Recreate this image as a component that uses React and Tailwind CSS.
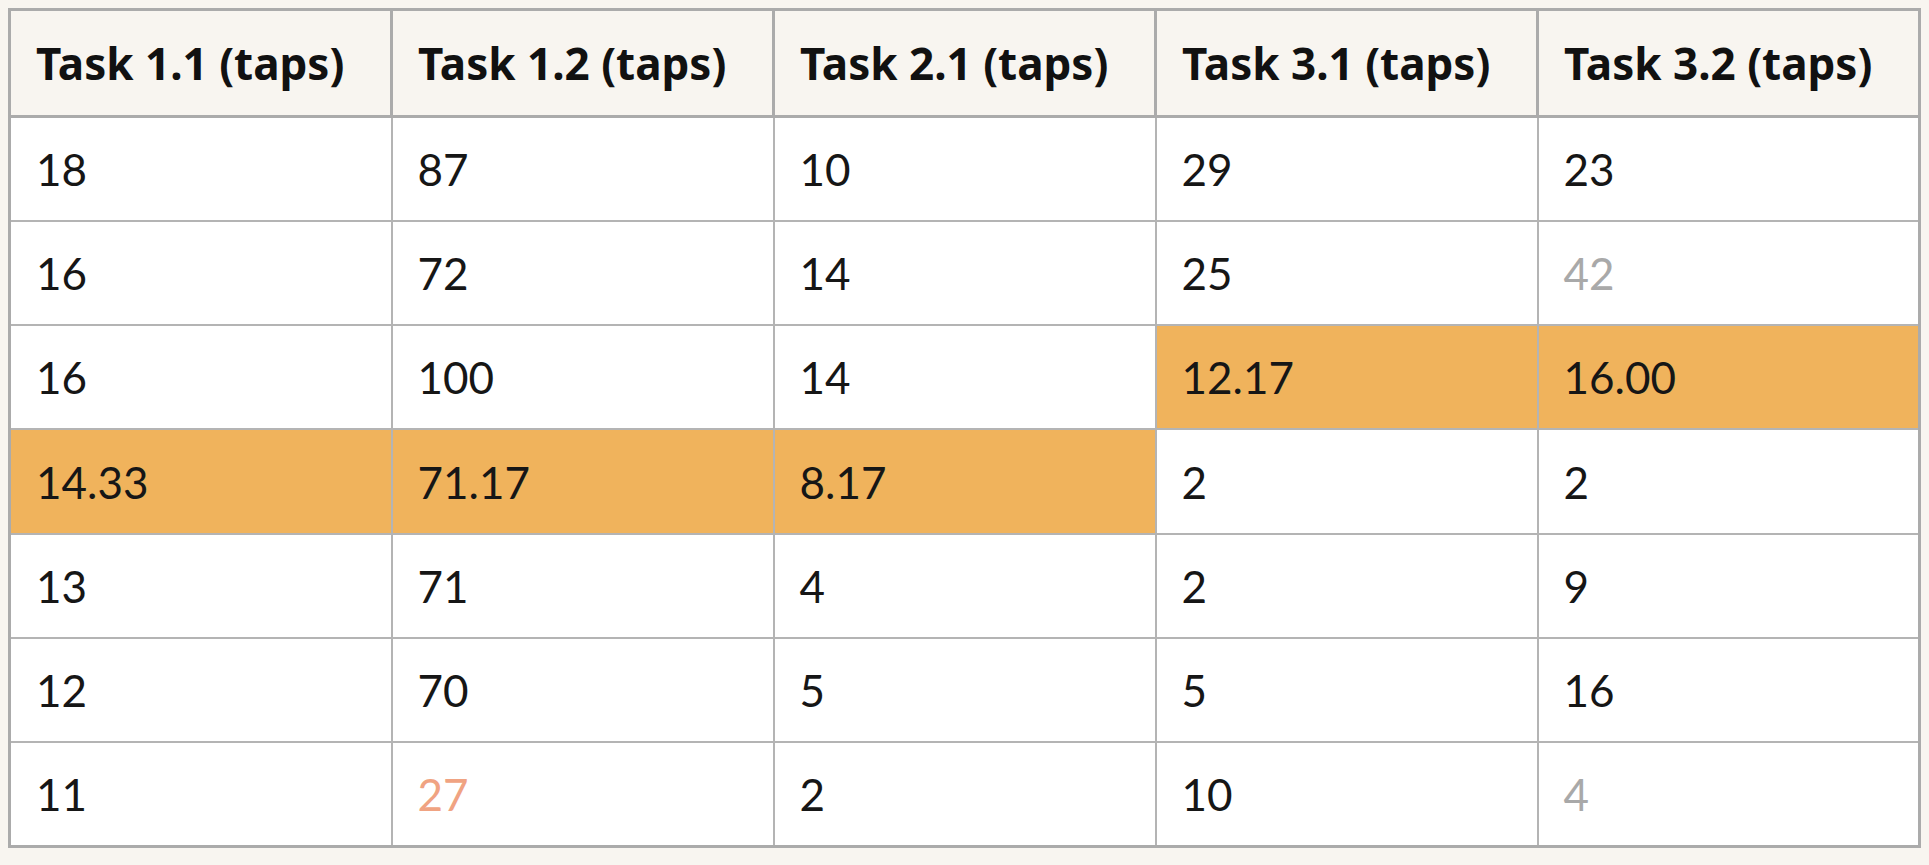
const headers = ['Task 1.1 (taps)', 'Task 1.2 (taps)', 'Task 2.1 (taps)', 'Task 3.1 (taps)', 'Task 3.2 (taps)']

// each cell: [value, tone] where tone is '' | 'hi' | 'muted' | 'warn'
const rows = [
  [['18'], ['87'], ['10'], ['29'], ['23']],
  [['16'], ['72'], ['14'], ['25'], ['42', 'muted']],
  [['16'], ['100'], ['14'], ['12.17', 'hi'], ['16.00', 'hi']],
  [['14.33', 'hi'], ['71.17', 'hi'], ['8.17', 'hi'], ['2'], ['2']],
  [['13'], ['71'], ['4'], ['2'], ['9']],
  [['12'], ['70'], ['5'], ['5'], ['16']],
  [['11'], ['27', 'warn'], ['2'], ['10'], ['4', 'muted']],
]

const toneClass = {
  hi: 'bg-[#f0b35c] text-[#161616]',
  muted: 'bg-white text-[#a9a9a9]',
  warn: 'bg-white text-[#f0a382]',
}

export default function App() {
  return (
    <div className="min-h-screen bg-[#f8f5f0] p-2 font-['Lato','Liberation_Sans',sans-serif]">
      <table className="w-[1913px] table-fixed border-collapse border-[3px] border-[#ababab]">
        <thead>
          <tr className="h-[107px] bg-[#f8f5f0]">
            {headers.map(h => (
              <th key={h} className="border-[3px] border-[#ababab] px-[25px] text-left font-['Noto_Sans','Liberation_Sans',sans-serif] text-[44px] font-bold text-[#111]">{h}</th>
            ))}
          </tr>
        </thead>
        <tbody>
          {rows.map((row, i) => (
            <tr key={i} className="h-[104.3px]">
              {row.map(([v, tone], j) => (
                <td key={j} className={`border-2 border-[#b4b4b4] px-[25px] text-[44px] ${tone ? toneClass[tone] : 'bg-white text-[#161616]'}`}>{v}</td>
              ))}
            </tr>
          ))}
        </tbody>
      </table>
    </div>
  )
}
